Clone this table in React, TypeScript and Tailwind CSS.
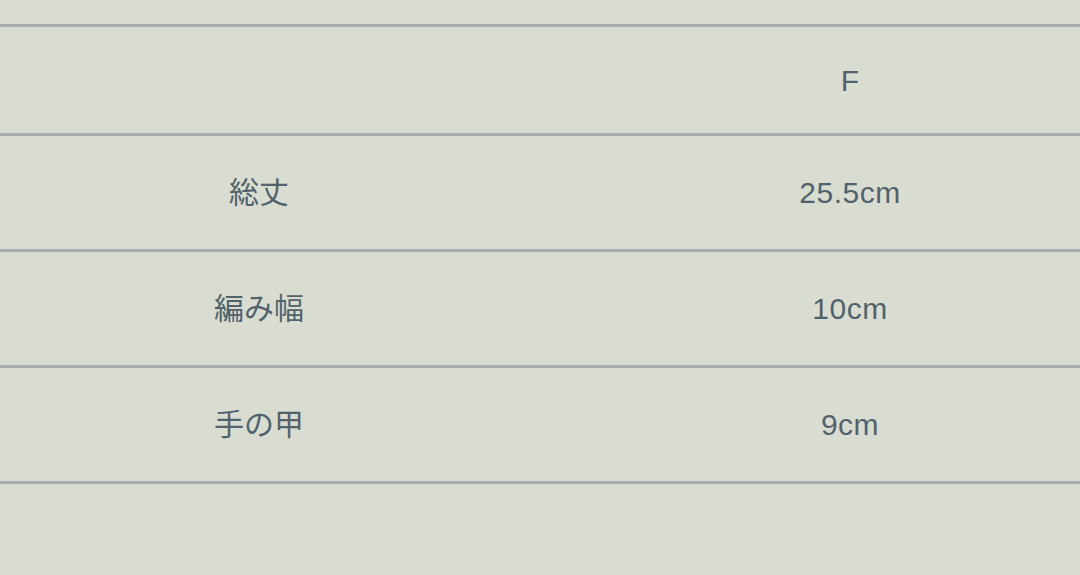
const rows = [
  { label: "総丈", value: "25.5cm" },
  { label: "編み幅", value: "10cm" },
  { label: "手の甲", value: "9cm" },
];

export default function App() {
  return (
    <div
      className="w-[1080px] h-[575px] overflow-hidden bg-[#d9ddd1] text-[#52626b] text-[30px]"
      style={{ fontFamily: '"Liberation Sans", "Noto Sans CJK JP", sans-serif' }}
    >
      <div className="h-[24px]" />
      <div className="w-[1182px] border-t-[3px] border-[#a8aeb0]">
        <div className="flex h-[109px] border-b-[3px] border-[#a8aeb0]">
          <div className="w-[518px]" />
          <div className="flex-1 flex items-center justify-center pt-[1px]">F</div>
        </div>
        {rows.map((r) => (
          <div key={r.label} className="flex h-[116px] border-b-[3px] border-[#a8aeb0]">
            <div className="w-[518px] flex items-center justify-center">{r.label}</div>
            <div className="flex-1 flex items-center justify-center tracking-[0.5px]">{r.value}</div>
          </div>
        ))}
      </div>
    </div>
  );
}
